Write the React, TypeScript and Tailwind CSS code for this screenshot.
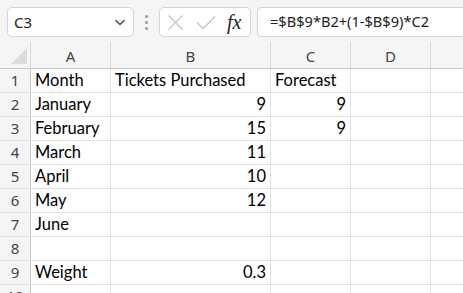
import React from "react";

const cols = [
  { key: "A", w: "w-[80px]" },
  { key: "B", w: "w-[160px]" },
  { key: "C", w: "w-[80px]" },
  { key: "D", w: "w-[80px]" },
];

type Cell = { v: string; num?: boolean };

const rows: Cell[][] = [
  [{ v: "Month" }, { v: "Tickets Purchased" }, { v: "Forecast" }, { v: "" }],
  [{ v: "January" }, { v: "9", num: true }, { v: "9", num: true }, { v: "" }],
  [{ v: "February" }, { v: "15", num: true }, { v: "9", num: true }, { v: "" }],
  [{ v: "March" }, { v: "11", num: true }, { v: "" }, { v: "" }],
  [{ v: "April" }, { v: "10", num: true }, { v: "" }, { v: "" }],
  [{ v: "May" }, { v: "12", num: true }, { v: "" }, { v: "" }],
  [{ v: "June" }, { v: "" }, { v: "" }, { v: "" }],
  [{ v: "" }, { v: "" }, { v: "" }, { v: "" }],
  [{ v: "Weight" }, { v: "0.3", num: true }, { v: "" }, { v: "" }],
  [{ v: "" }, { v: "" }, { v: "" }, { v: "" }],
];

const ui = { fontFamily: '"Noto Sans", "Open Sans", sans-serif' };
const cellFont = { fontFamily: 'Lato, "Liberation Sans", sans-serif' };

export default function App() {
  return (
    <div className="w-[463px] h-[293px] overflow-hidden bg-white">
      {/* formula bar */}
      <div className="h-[42px] bg-[#f5f5f5] flex items-start pt-[7px] pl-[7px]" style={ui}>
        <div className="w-[127px] h-[30px] bg-white border border-[#d4d4d4] rounded-[5px] flex items-center justify-between pl-[6px] pr-[6px]">
          <span className="text-[15px] text-[#222]">C3</span>
          <svg width="14" height="14" viewBox="0 0 14 14" fill="none" stroke="#444" strokeWidth="1.3">
            <path d="M2.5 5l4.5 4.5 4.5-4.5" />
          </svg>
        </div>
        <div className="w-[25px] h-[30px] flex flex-col items-center justify-center gap-[3px]">
          <span className="w-[3px] h-[3px] rounded-full bg-[#999]" />
          <span className="w-[3px] h-[3px] rounded-full bg-[#999]" />
          <span className="w-[3px] h-[3px] rounded-full bg-[#999]" />
        </div>
        <div className="w-[92px] h-[30px] bg-white border border-[#d4d4d4] rounded-[5px] flex items-center pl-[7px] gap-[12px]">
          <svg width="17" height="17" viewBox="0 0 17 17" fill="none" stroke="#c4c4c4" strokeWidth="1.3">
            <path d="M1.5 1.5l14 14M15.5 1.5l-14 14" />
          </svg>
          <svg width="20" height="15" viewBox="0 0 20 15" fill="none" stroke="#c4c4c4" strokeWidth="1.3">
            <path d="M1 7.5l6 6L19 1.5" />
          </svg>
          <span className="text-[20px] italic text-[#222] leading-none -ml-[1px]" style={{ fontFamily: '"Liberation Serif", serif' }}>
            fx
          </span>
        </div>
        <div className="ml-[6px] flex-1 h-[30px] bg-white border border-[#d4d4d4] border-r-0 rounded-l-[5px] flex items-center pl-[12px]">
          <span className="text-[14.6px] text-[#222]">=$B$9*B2+(1-$B$9)*C2</span>
        </div>
      </div>

      {/* column headers */}
      <div className="flex h-[27px] bg-[#f5f5f5] border-b border-[#c6c6c6]" style={ui}>
        <div className="w-[31px] border-r border-[#dadada] flex items-end justify-end pr-[3px] pb-[4px]">
          <svg width="16" height="16" viewBox="0 0 16 16">
            <path d="M16 0V16H0Z" fill="#dcdcdc" />
          </svg>
        </div>
        {cols.map((c) => (
          <div
            key={c.key}
            className={`${c.w} border-r border-[#dadada] flex items-center justify-center text-[15px] text-[#444] pt-[2px]`}
          >
            {c.key}
          </div>
        ))}
        <div className="flex-1" />
      </div>

      {/* rows */}
      {rows.map((r, i) => (
        <div key={i} className="flex h-[24px] border-b border-[#e1e1e1]">
          <div
            className="w-[31px] bg-[#f5f5f5] border-r border-[#c6c6c6] flex items-center justify-center text-[15px] text-[#444]"
            style={ui}
          >
            {i + 1}
          </div>
          {r.map((c, j) => (
            <div
              key={j}
              className={`${cols[j].w} border-r border-[#e1e1e1] flex items-end pb-[1px] px-[4px] text-[16.5px] leading-[22px] text-black whitespace-nowrap ${
                c.num ? "justify-end" : "justify-start"
              }`}
              style={cellFont}
            >
              {c.v}
            </div>
          ))}
          <div className="flex-1" />
        </div>
      ))}
    </div>
  );
}
